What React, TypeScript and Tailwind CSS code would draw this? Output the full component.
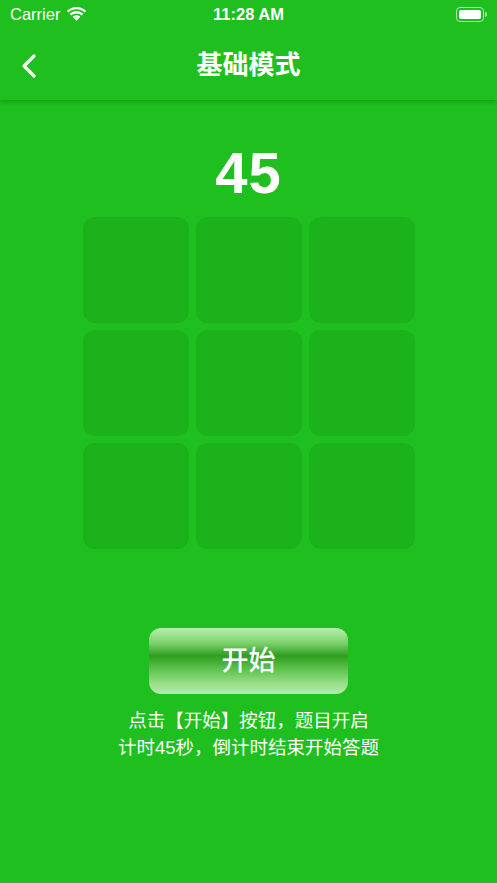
import React from "react";

const font = { fontFamily: '"Liberation Sans", "Noto Sans CJK SC", sans-serif' };

function StatusBar() {
  return (
    <div className="relative flex h-[28px] items-center justify-between pl-[10px] pr-[10px] text-white">
      <div className="flex items-center gap-[6px] text-[16.5px]">
        <span>Carrier</span>
        <svg width="21" height="15" viewBox="0 0 19 14" fill="white">
          <path d="M9.5 2.2c2.9 0 5.5 1.1 7.5 3l1.5-1.5C16.1 1.4 12.9 0 9.5 0S2.9 1.4.5 3.7L2 5.2c2-1.9 4.6-3 7.5-3z" />
          <path d="M9.5 6c1.9 0 3.6.7 4.9 1.9l1.5-1.5C14.2 4.8 12 3.8 9.5 3.8S4.8 4.8 3.1 6.4l1.5 1.5C5.9 6.7 7.6 6 9.5 6z" />
          <path d="M9.5 9.6c.9 0 1.7.3 2.3.9L9.5 13 7.2 10.5c.6-.6 1.4-.9 2.3-.9z" />
          <path d="M9.5 7.7c1.4 0 2.6.5 3.5 1.4l-1.2 1.3c-.6-.6-1.4-.9-2.3-.9s-1.7.3-2.3.9L6 9.1c.9-.9 2.1-1.4 3.5-1.4z" />
        </svg>
      </div>
      <span className="absolute left-1/2 -translate-x-1/2 text-[16.5px] font-semibold">11:28 AM</span>
      <div className="flex items-center">
        <div className="flex h-[15px] w-[28px] items-center rounded-[4px] border border-white/60 p-[2px]">
          <div className="h-full w-full rounded-[2px] bg-white" />
        </div>
        <div className="ml-[1px] h-[5px] w-[2px] rounded-r bg-white/60" />
      </div>
    </div>
  );
}

export default function App() {
  return (
    <div className="flex h-[883px] w-full flex-col bg-[#1ebf1e]" style={font}>
      <div className="relative z-10 bg-[#1ebf1e] shadow-[0_2px_4px_rgba(0,0,0,0.18)]">
        <StatusBar />
        <div className="relative flex h-[72px] items-center justify-center pt-[3px]">
          <svg className="absolute left-[20px]" width="18" height="28" viewBox="0 0 18 28" fill="none">
            <path d="M14 4L4 14l10 10" stroke="white" strokeWidth="3.2" strokeLinecap="round" strokeLinejoin="round" />
          </svg>
          <span className="text-[26px] font-bold text-white">基础模式</span>
        </div>
      </div>

      <div className="flex flex-col items-center">
        <div className="mt-[43px] text-[58px] font-bold leading-[60px] tracking-[1px] text-white">45</div>
        <div className="mt-[14px] grid grid-cols-[106px_106px_106px] grid-rows-[106px_106px_106px] gap-[7px]">
          {Array.from({ length: 9 }).map((_, i) => (
            <div key={i} className="rounded-[12px] bg-[#1bb21b]" />
          ))}
        </div>

        <button
          className="mt-[79px] flex h-[66px] w-[199px] items-center justify-center rounded-[12px] text-[27px] font-medium text-white"
          style={{ background: "linear-gradient(to bottom, #b8eeac 0%, #7fd36f 22%, #2e9e22 42%, #5cc24c 62%, #9adf8a 85%, #b4ebaa 100%)" }}
        >
          开始
        </button>

        <div className="mt-[13px] text-center text-[18.5px] leading-[27px] text-white">
          <p>点击【开始】按钮，题目开启</p>
          <p>计时45秒，倒计时结束开始答题</p>
        </div>
      </div>
    </div>
  );
}
